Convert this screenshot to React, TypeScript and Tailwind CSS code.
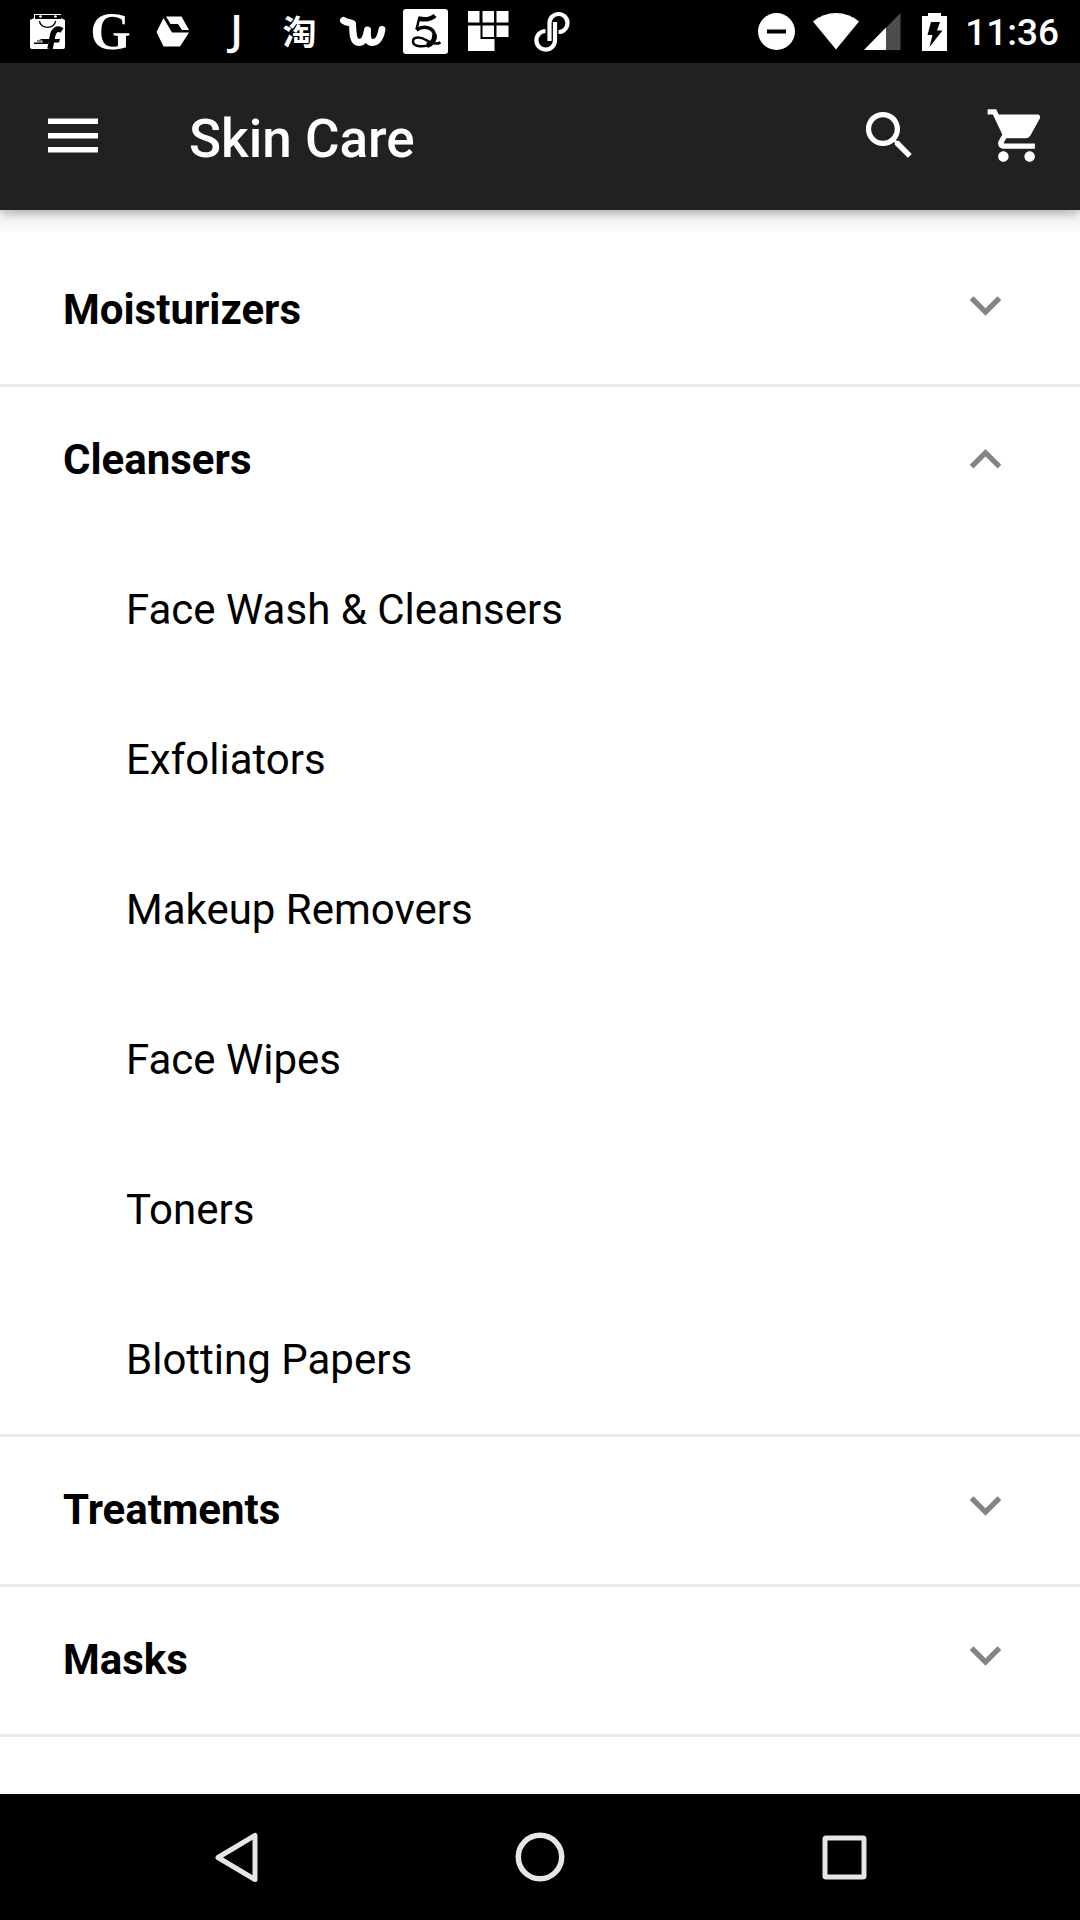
import { useState } from "react";
import type { ReactNode } from "react";
import { MdSearch, MdShoppingCart } from "react-icons/md";

type Category = { name: string; items: string[] };

const categories: Category[] = [
  { name: "Moisturizers", items: [] },
  {
    name: "Cleansers",
    items: [
      "Face Wash & Cleansers",
      "Exfoliators",
      "Makeup Removers",
      "Face Wipes",
      "Toners",
      "Blotting Papers",
    ],
  },
  { name: "Treatments", items: [] },
  { name: "Masks", items: [] },
  { name: "Eye Care", items: [] },
];

function AppIcon({ children }: { children: ReactNode }) {
  return (
    <svg viewBox="0 0 63 63" className="size-[63px] shrink-0" fill="#fff" aria-hidden="true">
      {children}
    </svg>
  );
}

function StatusBar() {
  return (
    <div className="flex h-[63px] shrink-0 items-center justify-between bg-black pr-[21px] pl-4 text-white">
      <div className="flex items-center">
        <AppIcon>
          <path d="M18 14H45V18L49 20V47Q49 49 47 49H16Q14 49 14 47V20L18 18Z" />
          <rect x="19" y="15" width="26" height="4" fill="#000" />
          <circle cx="24.5" cy="16.5" r="1.3" />
          <circle cx="39.5" cy="16.5" r="1.3" />
          <path d="M23.5 21C24 29.5 39 29.5 39.5 21" fill="none" stroke="#000" strokeWidth="1.4" />
          <path d="M46 30.500C41 27 37.500 31 36.500 36L34 49" fill="none" stroke="#000" strokeWidth="5.500" />
          <path d="M23 39H44L43 42.500H32V44H18V42.500H27V41.500H21V40.500H27Z" fill="#000" />
        </AppIcon>
        <span className="w-[63px] text-center font-['Liberation_Serif'] text-[52px] leading-[63px] font-bold">G</span>
        <AppIcon>
          <path d="M21.500 18L14.500 32L21.500 46.500H38L47 32.500H30Z" />
          <path d="M24 16.500H39.500L47 30H40L36 24H28.500Z" />
        </AppIcon>
        <span className="w-[63px] pb-[6px] text-center font-['Open_Sans'] text-[42px] leading-[57px] font-semibold">J</span>
        <span className="w-[63px] pb-[2px] text-center font-['Noto_Sans_CJK_SC',sans-serif] text-[34px] leading-[61px] font-bold">
          淘
        </span>
        <AppIcon>
          <path
            d="M12.500 20.500C15 22.500 18 22.500 21.500 23.500C22 31 21 42.500 28 42.500C33.500 42.500 35.500 36 36.500 30C36 37 36.500 42.500 41.500 42.500C47 42.500 50 36 51 29.500"
            fill="none"
            stroke="#fff"
            strokeWidth="7"
            strokeLinecap="round"
            strokeLinejoin="round"
          />
        </AppIcon>
        <AppIcon>
          <rect x="9" y="9" width="45" height="45" rx="3" />
          <path d="M24.500 16C31 18 37 17.500 42 14.500C41 19 38 20.500 34 20.500H24Z" />
          <g fill="none" stroke="#000">
            <path d="M24.500 18.500C31 20 37 19.500 41 15.500" strokeWidth="4.500" />
            <path d="M25.500 17L22.500 29.500" strokeWidth="2.500" />
            <path d="M22.500 30C30 25 40 27.500 40.500 35.500" strokeWidth="3.500" />
            <path d="M40.500 34.500C41 40 38 44 33 45.500" strokeWidth="5" />
            <path d="M36 44.500C30 47.500 19 47 19 41.500C19 36 27 37 32 40C37 43.500 41 45 46.500 42.500" strokeWidth="2.500" />
          </g>
        </AppIcon>
        <AppIcon>
          <path d="M11 11H22.500V22.500H11ZM25.500 11H37V22.500H25.500ZM39.500 11H51.500V22.500H39.500ZM25.500 25.500H37V37H25.500ZM39.500 25.500H51.500V37H39.500ZM11 25.500H23.500V39H37.500V51H11Z" />
        </AppIcon>
        <AppIcon>
          <g fill="none" stroke="#fff" strokeWidth="4.200">
            <path d="M29.500 41V22.500A9 9 0 1 1 38.500 32" />
            <path d="M35 22V40.500A9.300 9.300 0 1 1 25.500 31" />
          </g>
        </AppIcon>
      </div>
      <div className="flex items-center">
        <svg viewBox="0 0 37 37" className="mr-[18px] size-[37px]" aria-hidden="true">
          <circle cx="18.500" cy="18.500" r="18.500" fill="#fff" />
          <rect x="9" y="16.500" width="19" height="4" fill="#000" />
        </svg>
        <svg viewBox="0 0 46 37" className="mr-[5px] h-[37px] w-[46px]" fill="#fff" aria-hidden="true">
          <path d="M0 8.500Q10 0 23 0T46 8.500L23 36.500Z" />
        </svg>
        <svg viewBox="0 0 37 37" className="mr-[21px] size-[37px]" aria-hidden="true">
          <path d="M36.500 0V37H0Z" fill="#4d4d4d" />
          <path d="M22 14.500V37H0Z" fill="#fff" />
        </svg>
        <svg viewBox="0 0 25 38" className="mr-[18px] h-[38px] w-[25px]" aria-hidden="true">
          <path d="M0 3H6V0H19V3H25V38H0Z" fill="#fff" />
          <path d="M9 9H18L15 17.500H20.500L7.500 34L10.500 22H5.500Z" fill="#000" />
        </svg>
        <span className="pt-[3px] text-[37px] leading-[54px] font-medium">11:36</span>
      </div>
    </div>
  );
}

function Chevron({ open }: { open: boolean }) {
  return open ? (
    <svg viewBox="0 0 24 24" className="size-[63px] fill-[#848484]" aria-hidden="true">
      <path d="M12 8l-6 6 1.410 1.410L12 10.830l4.590 4.580L18 14z" />
    </svg>
  ) : (
    <svg viewBox="0 1.600 24 24" className="size-[63px] fill-[#848484]" aria-hidden="true">
      <path d="M16.590 8.590L12 13.170 7.410 8.590 6 10l6 6 6-6z" />
    </svg>
  );
}

export default function App() {
  const [expanded, setExpanded] = useState("Cleansers");

  return (
    <div className="flex h-screen flex-col bg-[#fafafa] font-['Roboto',sans-serif]">
      <StatusBar />

      <header className="relative z-10 flex h-[147px] shrink-0 items-center bg-[#212121] pr-8 pb-[2px] pl-[42px] text-white shadow-[0_3px_12px_rgba(0,0,0,0.35)]">
        <button type="button" aria-label="Open menu" className="w-[63px]">
          <svg viewBox="0 0 63 63" className="size-[63px]" fill="#fff" aria-hidden="true">
            <path d="M6 14.500H56V20H6ZM6 29H56V34.500H6ZM6 43H56V48.500H6Z" />
          </svg>
        </button>
        <h1 className="ml-[84px] flex-1 pt-[6px] text-[53px] leading-[62px] font-medium">Skin Care</h1>
        <div className="flex gap-16">
          <button type="button" aria-label="Search">
            <MdSearch className="size-[63px]" />
          </button>
          <button type="button" aria-label="Shopping cart">
            <MdShoppingCart className="size-[63px]" />
          </button>
        </div>
      </header>

      <main className="mt-[21px] min-h-0 flex-1 overflow-y-auto bg-white pt-[6px] text-[42px] leading-[49px] text-black [scrollbar-width:none]">
        {categories.map(({ name, items }) => {
          const open = expanded === name;
          return (
            <section key={name} className="border-b-[3px] border-[#ececec]">
              <h2>
                <button
                  type="button"
                  aria-expanded={open}
                  onClick={() => setExpanded(open ? "" : name)}
                  className="flex h-[147px] w-full items-center justify-between px-[63px] pb-[2px] font-bold"
                >
                  {name}
                  <Chevron open={open} />
                </button>
              </h2>
              {open && items.length > 0 && (
                <ul className="pt-[3px]">
                  {items.map((item) => (
                    <li key={item} className="not-last:pb-[3px]">
                      <a href="#" className="flex h-[147px] items-center px-[126px] pb-[2px]">
                        {item}
                      </a>
                    </li>
                  ))}
                </ul>
              )}
            </section>
          );
        })}
      </main>

      <nav aria-label="System" className="grid h-[126px] shrink-0 grid-cols-3 bg-black px-[84px]">
        <button type="button" aria-label="Back" className="flex items-center justify-center">
          <svg viewBox="0 0 63 63" className="size-[63px]" fill="none" stroke="#e6e6e6" strokeWidth="5" strokeLinejoin="round" aria-hidden="true">
            <path d="M13 31.500L50 9.500V53.500Z" />
          </svg>
        </button>
        <button type="button" aria-label="Home" className="flex items-center justify-center">
          <svg viewBox="0 0 63 63" className="size-[63px]" fill="none" stroke="#e6e6e6" strokeWidth="5.500" aria-hidden="true">
            <circle cx="31" cy="31" r="21.700" />
          </svg>
        </button>
        <button type="button" aria-label="Recent apps" className="flex items-center justify-center">
          <svg viewBox="0 0 63 63" className="size-[63px]" fill="none" stroke="#e6e6e6" strokeWidth="5" aria-hidden="true">
            <rect x="12" y="12" width="39" height="39" rx="1" />
          </svg>
        </button>
      </nav>
    </div>
  );
}
